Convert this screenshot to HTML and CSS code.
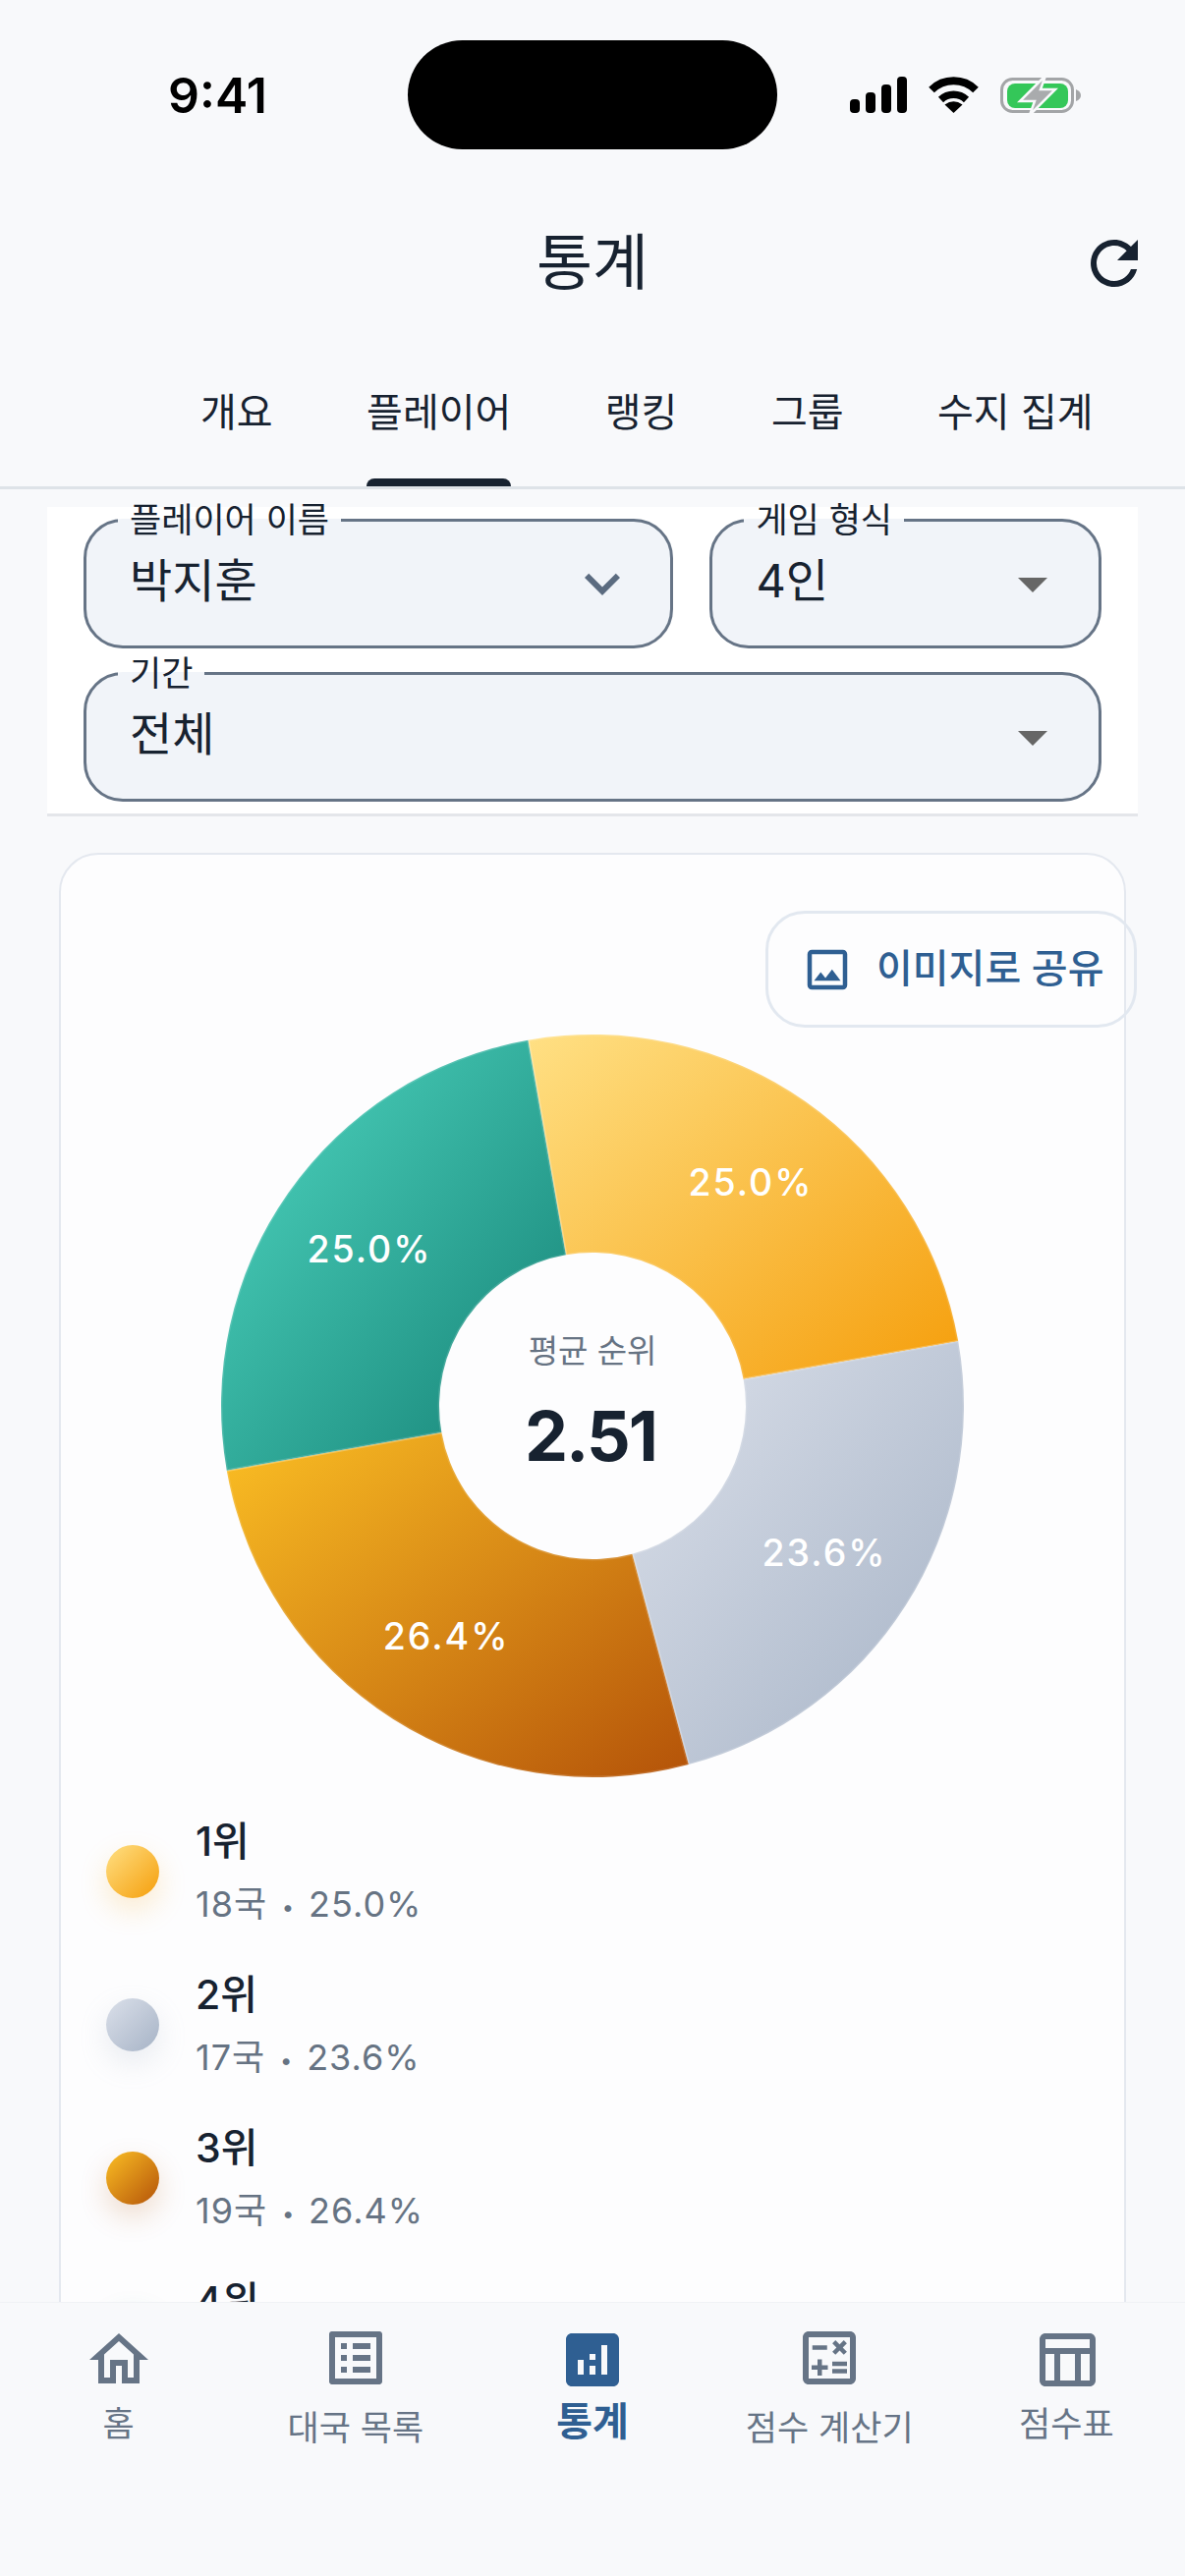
FILE: index.html
```html
<!DOCTYPE html>
<html lang="ko">
<head>
<meta charset="utf-8">
<title>통계</title>
<link rel="stylesheet" href="styles.css">
</head>
<body>
<div class="phone">
  <div class="status">
    <div class="time">9:41</div>
    <div class="island"></div>
    <div class="sys">
      <svg class="sig" width="58" height="37" viewBox="0 0 58 37"><rect x="0" y="23" width="10" height="14" rx="4"/><rect x="16" y="16" width="10" height="21" rx="4"/><rect x="32" y="8" width="10" height="29" rx="4"/><rect x="48" y="0" width="10" height="37" rx="4"/></svg>
      <svg class="wifi" width="51" height="37" viewBox="0 0 51 37"><path d="M3 13.5A32 32 0 0 1 48 13.5" fill="none" stroke="#000" stroke-width="8"/><path d="M12.5 23.5A19 19 0 0 1 38.5 23.5" fill="none" stroke="#000" stroke-width="7.5"/><path d="M25.5 37L16.5 28.5Q25.5 22 34.5 28.5Z"/></svg>
      <svg class="batt" width="84" height="40" viewBox="0 0 84 40"><rect x="1.5" y="3.5" width="72" height="33" rx="11" fill="none" stroke="#a3a5a7" stroke-width="3"/><rect x="7" y="8" width="62" height="25" rx="8" fill="#34c759"/><path d="M77 14Q82 16 82 20T77 26Z" fill="#a3a5a7"/><path d="M46 0L20 26H35L30 40L56 14H41Z" fill="#a9abad" stroke="#f8f9fb" stroke-width="2.5"/></svg>
    </div>
  </div>

  <header class="appbar">
    <div></div>
    <h1 class="title">통계</h1>
    <svg class="refresh" width="72" height="72" viewBox="0 0 24 24"><path d="M17.65 6.35C16.2 4.9 14.21 4 12 4c-4.42 0-7.99 3.58-7.99 8s3.57 8 7.99 8c3.73 0 6.84-2.55 7.73-6h-2.08c-.82 2.33-3.04 4-5.65 4-3.31 0-6-2.69-6-6s2.69-6 6-6c1.66 0 3.14.69 4.22 1.78L13 11h7V4l-2.35 2.35z"/></svg>
  </header>

  <nav class="tabs">
    <div class="tab">개요</div>
    <div class="tab tab-on">플레이어<span class="indicator"></span></div>
    <div class="tab">랭킹</div>
    <div class="tab">그룹</div>
    <div class="tab">수지 집계</div>
  </nav>

  <main class="main">
    <section class="filters">
      <div class="filter-row">
        <fieldset class="select select-wide">
          <legend class="select-label">플레이어 이름</legend>
          <div class="select-body">
            <span class="select-value">박지훈</span>
            <svg class="chev" width="72" height="72" viewBox="0 0 24 24"><path d="M7.41 8.59L12 13.17l4.59-4.58L18 10l-6 6-6-6 1.41-1.41z"/></svg>
          </div>
        </fieldset>
        <fieldset class="select select-narrow">
          <legend class="select-label">게임 형식</legend>
          <div class="select-body">
            <span class="select-value">4인</span>
            <svg class="drop" width="72" height="72" viewBox="0 0 24 24"><path d="M7 10l5 5 5-5z"/></svg>
          </div>
        </fieldset>
      </div>
      <fieldset class="select">
        <legend class="select-label">기간</legend>
        <div class="select-body">
          <span class="select-value">전체</span>
          <svg class="drop" width="72" height="72" viewBox="0 0 24 24"><path d="M7 10l5 5 5-5z"/></svg>
        </div>
      </fieldset>
    </section>

    <section class="card">
      <div class="share-row">
        <button class="share">
          <svg width="54" height="54" viewBox="0 0 24 24"><path d="M19 5v14H5V5h14m0-2H5c-1.1 0-2 .9-2 2v14c0 1.1.9 2 2 2h14c1.1 0 2-.9 2-2V5c0-1.1-.9-2-2-2zm-4.86 8.86l-3 3.87L9 13.14 6 17h12l-3.86-5.14z"/></svg>
          <span class="share-text">이미지로 공유</span>
        </button>
      </div>

      <svg class="donut" width="760" height="760" viewBox="-380 -380 760 760">
        <defs>
          <linearGradient id="g1" x1="0" y1="0" x2="1" y2="1"><stop offset="0" stop-color="#ffe084"/><stop offset="1" stop-color="#f59e0b"/></linearGradient>
          <linearGradient id="g2" x1="0" y1="0" x2="1" y2="1"><stop offset="0" stop-color="#dbe0ea"/><stop offset="1" stop-color="#a6b3c6"/></linearGradient>
          <linearGradient id="g3" x1="0" y1="0" x2="1" y2="1"><stop offset="0" stop-color="#fbbf24"/><stop offset="1" stop-color="#b45309"/></linearGradient>
          <linearGradient id="g4" x1="0" y1="0" x2="1" y2="1"><stop offset="0" stop-color="#50d8c2"/><stop offset="1" stop-color="#148074"/></linearGradient>
        </defs>
        <path class="slice" fill="url(#g1)" d="M-65.64 -372.25A378 378 0 0 1 372.25 -65.64L153.63 -27.09A156 156 0 0 0 -27.09 -153.63Z"/>
        <path class="slice" fill="url(#g2)" d="M372.25 -65.64A378 378 0 0 1 97.83 365.12L40.38 150.68A156 156 0 0 0 153.63 -27.09Z"/>
        <path class="slice" fill="url(#g3)" d="M97.83 365.12A378 378 0 0 1 -372.25 65.64L-153.63 27.09A156 156 0 0 0 40.38 150.68Z"/>
        <path class="slice" fill="url(#g4)" d="M-372.25 65.64A378 378 0 0 1 -65.64 -372.25L-27.09 -153.63A156 156 0 0 0 -153.63 27.09Z"/>
        <text class="pct" x="161" y="-214">25.0%</text>
        <text class="pct" x="236" y="163">23.6%</text>
        <text class="pct" x="-149" y="248">26.4%</text>
        <text class="pct" x="-227" y="-146">25.0%</text>
        <text class="avg-label" x="0" y="-44">평균 순위</text>
        <text class="avg-value" x="-2" y="56">2.51</text>
      </svg>

      <ul class="legend">
        <li class="legend-row">
          <span class="dot dot-1"></span>
          <div class="legend-text"><div class="rank">1위</div><div class="sub">18국<span class="sep">•</span>25.0%</div></div>
        </li>
        <li class="legend-row">
          <span class="dot dot-2"></span>
          <div class="legend-text"><div class="rank">2위</div><div class="sub">17국<span class="sep">•</span>23.6%</div></div>
        </li>
        <li class="legend-row">
          <span class="dot dot-3"></span>
          <div class="legend-text"><div class="rank">3위</div><div class="sub">19국<span class="sep">•</span>26.4%</div></div>
        </li>
        <li class="legend-row">
          <span class="dot dot-4"></span>
          <div class="legend-text"><div class="rank">4위</div><div class="sub">18국<span class="sep">•</span>25.0%</div></div>
        </li>
      </ul>
    </section>
  </main>

  <footer class="bottom">
    <div class="nav-item">
      <svg width="72" height="72" viewBox="0 0 24 24"><path d="M12 5.69l5 4.5V18h-2v-6H9v6H7v-7.81l5-4.5M12 3L2 12h3v8h6v-6h2v6h6v-8h3L12 3z"/></svg>
      <span class="nav-label">홈</span>
    </div>
    <div class="nav-item nav-up">
      <svg width="72" height="72" viewBox="0 0 24 24"><path d="M19 5v14H5V5h14m1.1-2H3.9c-.5 0-.9.4-.9.9v16.2c0 .4.4.9.9.9h16.2c.4 0 .9-.5.9-.9V3.9c0-.5-.5-.9-.9-.9zM11 7h6v2h-6V7zm0 4h6v2h-6v-2zm0 4h6v2h-6zM7 7h2v2H7zm0 4h2v2H7zm0 4h2v2H7z"/></svg>
      <span class="nav-label">대국 목록</span>
    </div>
    <div class="nav-item nav-on">
      <svg width="72" height="72" viewBox="0 0 24 24"><path d="M19 3H5c-1.1 0-2 .9-2 2v14c0 1.1.9 2 2 2h14c1.1 0 2-.9 2-2V5c0-1.1-.9-2-2-2zM9 17H7v-5h2v5zm4 0h-2v-3h2v3zm0-5h-2v-2h2v2zm4 5h-2V7h2v10z"/></svg>
      <span class="nav-label">통계</span>
    </div>
    <div class="nav-item nav-up">
      <svg width="72" height="72" viewBox="0 0 24 24"><path d="M19 3H5c-1.1 0-2 .9-2 2v14c0 1.1.9 2 2 2h14c1.1 0 2-.9 2-2V5c0-1.1-.9-2-2-2zm0 16H5V5h14v14zM6.25 7.72h5v1.5h-5zM13 15.75h5v1.5h-5zM13 13.25h5v1.5h-5zM8 18h1.5v-2h2v-1.5h-2v-2H8v2H6V16h2zM14.09 10.95l1.41-1.41 1.41 1.41 1.06-1.06-1.41-1.42 1.41-1.41L16.91 6 15.5 7.41 14.09 6l-1.06 1.06 1.41 1.41-1.41 1.42z"/></svg>
      <span class="nav-label">점수 계산기</span>
    </div>
    <div class="nav-item">
      <svg width="72" height="72" viewBox="0 0 24 24"><path d="M20 3H5c-1.1 0-2 .9-2 2v14c0 1.1.9 2 2 2h15c1.1 0 2-.9 2-2V5c0-1.1-.9-2-2-2zm0 2v3H5V5h15zm-5 14h-5v-9h5v9zM5 10h3v9H5v-9zm12 9v-9h3v9h-3z"/></svg>
      <span class="nav-label">점수표</span>
    </div>
  </footer>
</div>
</body>
</html>
```

FILE: styles.css
```css
* { box-sizing: border-box; }
html, body { margin: 0; padding: 0; }
body {
  width: 1206px;
  height: 2622px;
  overflow: hidden;
  font-family: Inter, "Noto Sans CJK KR", sans-serif;
  color: #172230;
  background: #f8f9fb;
}
.phone {
  width: 1206px;
  height: 2622px;
  display: flex;
  flex-direction: column;
  overflow: hidden;
  background: #f8f9fb;
}

/* status bar */
.status {
  height: 190px;
  flex: none;
  padding-top: 41px;
  display: grid;
  grid-template-columns: 415px 376px 1fr;
  align-items: start;
}
.time {
  padding-left: 171px;
  height: 111px;
  line-height: 113px;
  font-size: 50px;
  font-weight: 600;
  color: #000;
}
.island { height: 111px; border-radius: 56px; background: #000; }
.sys {
  display: flex;
  align-items: center;
  gap: 22px;
  height: 111px;
  padding-left: 74px;
}
.sig, .wifi { fill: #000; }
.batt { overflow: visible; }

/* app bar */
.appbar {
  height: 156px;
  flex: none;
  display: grid;
  grid-template-columns: 1fr auto 1fr;
  align-items: center;
  padding-right: 36px;
  padding-left: 36px;
}
.title {
  margin: 0;
  font-size: 62px;
  font-weight: 400;
  line-height: 1;
  color: #172230;
}
.refresh { justify-self: end; fill: #172230; }

/* tabs */
.tabs {
  height: 152px;
  flex: none;
  display: flex;
  gap: 95.5px;
  padding: 49px 0 0 204px;
  border-bottom: 3px solid #dee3e8;
}
.tab {
  position: relative;
  line-height: 50px;
  font-size: 40px;
  white-space: nowrap;
  color: #172230;
}
.indicator {
  position: absolute;
  left: 0;
  right: 0;
  top: 92px;
  height: 8px;
  border-radius: 12px 12px 0 0;
  background: #172230;
}

/* main */
.main {
  flex: 1;
  min-height: 0;
  overflow: hidden;
}
.filters {
  margin: 18px 48px 0;
  height: 315px;
  padding: 1px 37px 0;
  background: #fff;
  border-bottom: 3px solid #e4e6ea;
  display: flex;
  flex-direction: column;
  gap: 13px;
}
.filter-row { display: flex; gap: 37px; }
.select {
  margin: 0;
  padding: 0;
  min-width: 0;
  height: 143px;
  border: 3px solid #667486;
  border-radius: 40px;
  background: #f1f4f9;
}
.select-wide { width: 601px; }
.select-narrow { width: 399px; }
.select-label {
  margin-left: 32px;
  padding: 0 12px;
  height: 24px;
  line-height: 24px;
  font-size: 35px;
  color: #172230;
  white-space: nowrap;
}
.select-body {
  height: 116px;
  display: flex;
  align-items: center;
  justify-content: space-between;
  padding-left: 44px;
  padding-right: 36px;
  padding-bottom: 10px;
}
.select-value { font-size: 47px; line-height: 60px; color: #172230; margin-bottom: 7px; }
.chev { fill: #5b6b80; margin-right: -3px; }
.drop { fill: #666; margin-right: -5px; }

/* card */
.card {
  margin: 37px 60px 0;
  height: 1600px;
  background: #fdfdfe;
  border: 2px solid #e4e8ef;
  border-radius: 40px;
  padding-top: 57px;
}
.share-row { display: flex; justify-content: flex-end; margin-right: -13px; }
.share {
  width: 378px;
  height: 119px;
  display: flex;
  align-items: center;
  gap: 23px;
  padding: 0 0 0 33px;
  border: 3px solid #e2e8f0;
  border-radius: 40px;
  background: transparent;
  font-family: inherit;
  font-size: 40px;
  font-weight: 500;
  color: #2f5f92;
  white-space: nowrap;
}
.share svg { fill: #2f5f92; flex: none; }
.share-text { margin-bottom: 8px; }
.donut { display: block; margin: 5px auto 0; }
.slice { stroke: rgba(255, 255, 255, 0.14); stroke-width: 3; }
.pct {
  font-size: 37.5px;
  font-weight: 500;
  fill: #fff;
  text-anchor: middle;
  letter-spacing: 2px;
}
.avg-label { font-size: 33px; fill: #667383; text-anchor: middle; }
.avg-value { font-size: 70px; font-weight: 700; fill: #172230; text-anchor: middle; letter-spacing: -2px; }

/* legend */
.legend {
  list-style: none;
  margin: 16px 0 0;
  padding: 0 0 0 46px;
}
.legend-row {
  height: 156px;
  display: flex;
  align-items: center;
  gap: 37px;
}
.legend-text { padding-top: 6px; }
.dot { width: 54px; height: 54px; border-radius: 50%; flex: none; }
.dot-1 { background: linear-gradient(135deg, #ffe084, #f59e0b); box-shadow: 0 12px 30px rgba(245, 158, 11, 0.2); }
.dot-2 { background: linear-gradient(135deg, #dbe0ea, #a6b3c6); box-shadow: 0 12px 30px rgba(148, 163, 184, 0.2); }
.dot-3 { background: linear-gradient(135deg, #fbbf24, #b45309); box-shadow: 0 12px 30px rgba(180, 83, 9, 0.2); }
.dot-4 { background: linear-gradient(135deg, #50d8c2, #148074); box-shadow: 0 12px 30px rgba(27, 133, 121, 0.2); }
.rank { font-size: 41px; font-weight: 500; line-height: 62px; color: #172230; }
.sub { font-size: 36px; line-height: 66px; color: #667383; letter-spacing: 1px; }
.sep { display: inline-block; width: 42px; text-align: center; font-size: 22px; letter-spacing: 0; vertical-align: 2px; }

/* bottom nav */
.bottom {
  height: 279px;
  flex: none;
  display: grid;
  grid-template-columns: repeat(5, 1fr);
  background: #f8f9fb;
  border-top: 1px solid #f0f2f5;
  position: relative;
}
.nav-item {
  display: flex;
  flex-direction: column;
  align-items: center;
  padding-top: 22px;
}
.nav-item svg { fill: #667486; flex: none; }
.nav-label {
  margin-top: 5px;
  font-size: 35px;
  line-height: 48px;
  color: #667486;
  white-space: nowrap;
}
.nav-up { padding-top: 20px; }
.nav-up .nav-label { margin-top: 11px; }
.nav-on svg { fill: #2f5f92; }
.nav-on .nav-label { margin-top: 3px; font-size: 40px; font-weight: 600; color: #2f5f92; }
```
